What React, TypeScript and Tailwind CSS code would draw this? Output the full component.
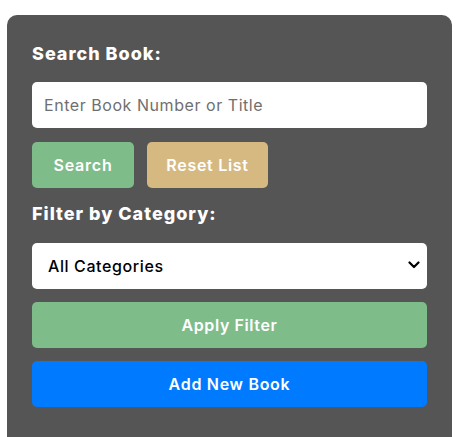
import React from "react";

export default function App() {
  return (
    <div className="min-h-[437px] bg-white pt-[15px] pl-[7px] font-['Inter',sans-serif]">
      <div className="w-[445px] h-[422px] rounded-t-[10px] bg-[#555555] px-[25px] pt-[28px] flex flex-col">
        <h3 className="text-[18px] leading-[22px] font-extrabold text-white tracking-[1px]">Search Book:</h3>
        <input
          type="text"
          placeholder="Enter Book Number or Title"
          className="mt-[17px] h-[46px] w-full rounded-[5px] bg-white px-[12px] text-[16px] tracking-[0.55px] text-black placeholder:text-[#6f6f6f] outline-none"
        />
        <div className="mt-[14px] flex gap-[13px]">
          <button className="h-[46px] w-[102px] rounded-[5px] bg-[#7ebc89] text-[16px] font-semibold tracking-[0.8px] text-white">Search</button>
          <button className="h-[46px] w-[121px] rounded-[5px] bg-[#d5b981] text-[16px] font-semibold tracking-[0.7px] text-white">Reset List</button>
        </div>
        <h3 className="mt-[15px] text-[18px] leading-[22px] font-extrabold text-white tracking-[1px]">Filter by Category:</h3>
        <div className="relative mt-[18px] h-[46px] w-full">
          <select className="h-[46px] w-full appearance-none rounded-[5px] bg-white pl-[16px] text-[16px] font-medium tracking-[0.6px] text-black outline-none">
            <option>All Categories</option>
          </select>
          <svg className="pointer-events-none absolute right-[7px] top-[18px]" width="12" height="8" viewBox="0 0 12 8">
            <path d="M1.5 1.5 L6 6 L10.5 1.5" fill="none" stroke="#000" strokeWidth="2.2" strokeLinecap="round" strokeLinejoin="round" />
          </svg>
        </div>
        <button className="mt-[13px] h-[46px] w-full rounded-[5px] bg-[#7ebc89] text-[16px] font-semibold tracking-[0.6px] text-white">Apply Filter</button>
        <button className="mt-[13px] h-[46px] w-full rounded-[5px] bg-[#007bff] text-[16px] font-semibold tracking-[0.7px] text-white">Add New Book</button>
      </div>
    </div>
  );
}
